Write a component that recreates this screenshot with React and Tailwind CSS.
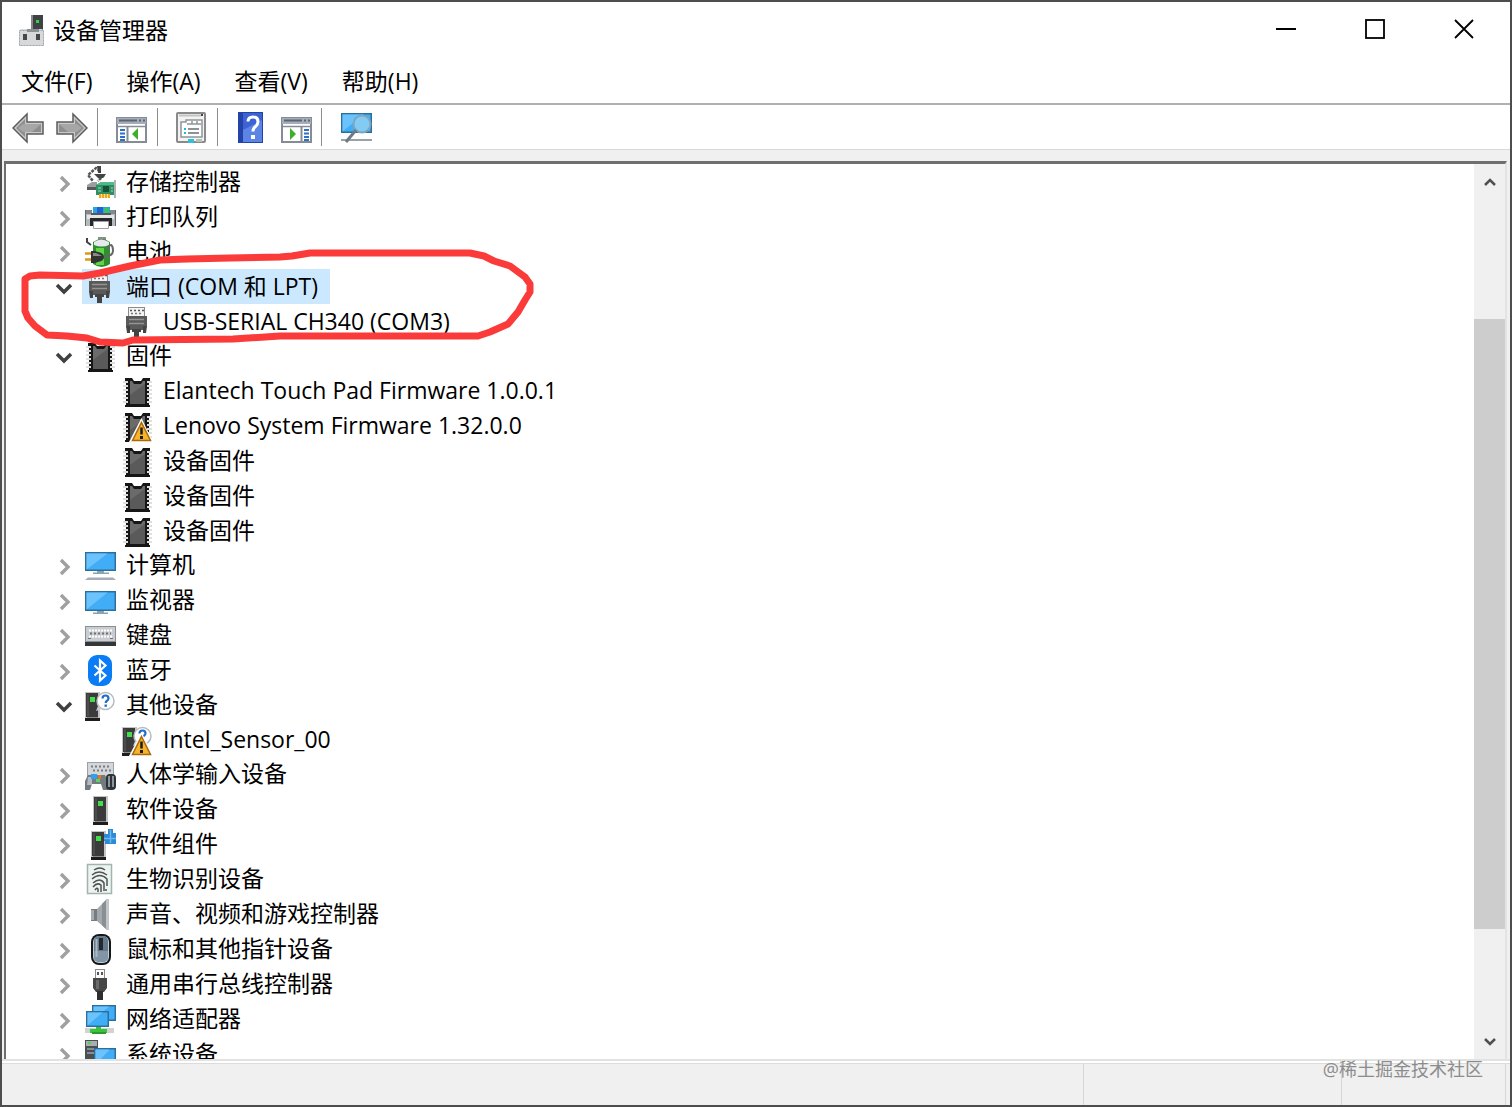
import React, { useState } from "react";

function Icon({ children }) {
  return (
    <svg viewBox="0 0 32 32" className="w-8 h-8 shrink-0" aria-hidden="true">
      {children}
    </svg>
  );
}

/* ---------- shared icon parts ---------- */

function Screen({ x, y, w, h }) {
  return (
    <>
      <rect x={x} y={y} width={w} height={h} fill="#2b6f9c" />
      <rect x={x + 1.5} y={y + 1.5} width={w - 3} height={h - 3} fill="#42adf7" />
      <path
        d={`M${x + 1.5} ${y + 1.5}h${(w - 3) * 0.75}L${x + 1.5} ${y + h - 1.5}z`}
        fill="#6cc2fb"
      />
    </>
  );
}

function Tower({ x }) {
  return (
    <>
      <rect x={x} y="3" width="15" height="27" fill="#c4c4c4" />
      <rect x={x + 1} y="4" width="12" height="24" fill="#3b3b3b" />
      <rect x={x + 2} y="5" width="2" height="22" fill="#4c4c4c" />
      <rect x={x + 5} y="8" width="5" height="5" fill="#41e04a" />
      <rect x={x} y="29" width="15" height="3" fill="#1d1d1d" />
      <rect x={x + 2} y="28" width="11" height="1" fill="#8a8a8a" />
    </>
  );
}

function Chip() {
  return (
    <>
      <path d="M4 3h7l2 3h7l2-3h7v29H4z" fill="#161616" />
      <path d="M4.500 6v24M28.500 6v24" stroke="#dedede" strokeWidth="5" strokeDasharray="2 2" />
      <path d="M3.500 8v22M29.500 8v22" stroke="#fff" strokeWidth="3" strokeDasharray="2 2" />
      <path d="M9 6h2l2 3h7l2-3h2v23H9z" fill="#6b6b6b" />
      <path d="M9 20L24 9v20H9z" fill="#5a5a5a" />
    </>
  );
}

function Warning() {
  return (
    <>
      <path d="M20.5 8L32 32H8z" fill="#fff" />
      <path d="M20.5 12.5l9 18h-18z" fill="#f6b32c" stroke="#a9690a" strokeWidth="1.5" />
      <path d="M20.5 17.5v7" stroke="#1c1c1c" strokeWidth="2.5" />
      <rect x="19" y="26" width="3" height="3" fill="#1c1c1c" />
    </>
  );
}

function Bubble() {
  return (
    <>
      <circle cx="21.5" cy="12" r="8.5" fill="#fff" stroke="#b7bcc0" strokeWidth="1.5" />
      <path d="M14 17l-2 5 6-2z" fill="#c8cccf" />
      <path d="M18.5 9.500q0-3 3-3t3 2.800q0 1.500-1.800 2.700-1 .7-1 2" fill="none" stroke="#1f6fc4" strokeWidth="2.2" />
      <rect x="20.5" y="15.5" width="2.4" height="2.3" fill="#1f6fc4" />
    </>
  );
}

function Port() {
  return (
    <>
      <rect x="7.5" y="1.5" width="16" height="10" fill="#f4f4f4" stroke="#8b8b8b" />
      <path d="M9 4.500h14" stroke="#555" strokeWidth="1.5" strokeDasharray="2 2" />
      <path d="M10 7.500h12" stroke="#777" strokeWidth="1.5" strokeDasharray="2 2" />
      <path d="M5 10h21v10l-2 4H7l-2-4z" fill="#5a5a5a" />
      <path d="M8 13.500h15M8 17.500h15" stroke="#949494" strokeWidth="1.5" />
      <path d="M5 20h4v7H6zM22 20h4l-1 7h-3zM11 23h9v3h-2v6h-5v-6h-2z" fill="#444" />
    </>
  );
}

const icons = {
  storage: (
    <>
      <path d="M16 5l-4-3-8 7 5 6M20 9l-6 6" fill="none" stroke="#555" strokeWidth="2.5" strokeDasharray="3 1" />
      <path d="M10 8h12l-3 4h-5zM13 0h4v7h-3z" fill="#444" />
      <path d="M3 19l5-3h5v7H3z" fill="#9a9ea0" />
      <path d="M3 21h10v3H3z" fill="#55595b" />
      <path d="M12 19l5-3h13v13H12z" fill="#2f8f63" />
      <path d="M12 19l5-3h13v3z" fill="#4fb98a" />
      <rect x="19" y="20" width="6" height="6" fill="#14533a" />
      <path d="M14 22h3M14 25h3M27 22h2M27 25h2" stroke="#9be0c0" />
      <path d="M31 14v18" stroke="#9a9a9a" strokeWidth="1.5" />
      <rect x="15" y="28" width="11" height="4" fill="#f0a51e" />
      <path d="M17.5 28v4M20.5 28v4M23.5 28v4" stroke="#fbe08b" />
    </>
  ),
  printer: (
    <>
      <rect x="9" y="6" width="17" height="8" fill="#2aa3e0" />
      <rect x="13" y="6" width="6" height="8" fill="#1c63d6" />
      <rect x="20" y="7" width="5" height="5" fill="#37c26a" />
      <path d="M1 9h7v4h18V9h6v16H1z" fill="#b6babd" />
      <path d="M1 9h7v4H1zM26 9h6v4h-6z" fill="#85898d" />
      <path d="M7 12h20v2H7z" fill="#55585b" />
      <path d="M3 14h27v4H3z" fill="#e3e5e7" />
      <path d="M6 17h22v8h-3v-4H9v4H6z" fill="#26282a" />
      <path d="M9.5 20.500h15v7h-15z" fill="#fff" stroke="#a0a0a0" />
      <path d="M1 9h1v16H1zM31 9h1v16h-1z" fill="#63686c" />
    </>
  ),
  battery: (
    <>
      <rect x="14" y="1" width="8" height="4" fill="#8c8c8c" />
      <path d="M9 6q9-6 17 0v22q-8 6-17 0z" fill="#2f8f2f" />
      <path d="M10 6q7-5 15 0v3q-7 3-15 0z" fill="#e8e8ee" />
      <path d="M12 12h8v17h-8z" fill="#5fd648" />
      <path d="M3 2v4l4 3" fill="none" stroke="#444" strokeWidth="2" />
      <path d="M20 21q9-1 9-6t-2-6q-3 0-3 5" fill="none" stroke="#666" strokeWidth="2" />
      <path d="M1 17.500h8M1 23.500h8" stroke="#d99b1b" strokeWidth="2.5" />
      <path d="M7 15h4l3 1q6 1 6 5t-6 5l-3 1H7z" fill="#333" />
      <path d="M9 17h3l6 3H9z" fill="#8b8b8b" />
    </>
  ),
  port: <Port />,
  chip: <Chip />,
  chipWarning: (
    <>
      <Chip />
      <Warning />
    </>
  ),
  computer: (
    <>
      <Screen x={1} y={3} w={31} h={19} />
      <path d="M13 22h7v1.500h5V25H9v-1.500h4z" fill="#8aa4b4" />
      <path d="M1 31l3-2.500h25l3 2.500z" fill="#a8acb6" />
    </>
  ),
  monitor: (
    <>
      <Screen x={1} y={7} w={31} h={20} />
      <path d="M13 27h7v1.500h4V30H9v-1.500h4z" fill="#8aa4b4" />
    </>
  ),
  keyboard: (
    <>
      <rect x="1" y="7" width="31" height="20" fill="#8a8f94" />
      <rect x="2" y="8" width="29" height="14" fill="#c9cdd1" />
      <path d="M5 11.500h23M5 17.500h23" stroke="#fff" strokeWidth="2" strokeDasharray="2 1" />
      <path d="M6 14.500h21" stroke="#6d7276" strokeWidth="2" strokeDasharray="2 2" />
      <path d="M4 19.500h3M26 19.500h3" stroke="#6d7276" />
      <rect x="1" y="23" width="31" height="4" fill="#34373a" />
    </>
  ),
  bluetooth: (
    <>
      <rect x="4" y="1" width="24" height="31" rx="9" fill="#0a7cf5" />
      <path d="M10.5 11.500l11 10-5.500 5V6.500l5.500 5-11 10" fill="none" stroke="#fff" strokeWidth="2.2" />
    </>
  ),
  unknown: (
    <>
      <Tower x={1} />
      <Bubble />
    </>
  ),
  unknownWarning: (
    <>
      <Tower x={1} />
      <Bubble />
      <Warning />
    </>
  ),
  hid: (
    <>
      <rect x="3" y="4" width="27" height="17" fill="#9aa0a6" />
      <rect x="4" y="5" width="25" height="14" fill="#d4d7da" />
      <path d="M7 8.500h20M9 12.500h18" stroke="#777c80" strokeWidth="2" strokeDasharray="2 2" />
      <path d="M4 17h17l3 6v9h-5l-2-6H8l-2 6H1v-9z" fill="#737a80" />
      <path d="M4 19h4v8H3z" fill="#b4bac0" />
      <rect x="7" y="16" width="6" height="5" fill="#2f9ff0" />
      <rect x="14" y="17" width="3" height="4" fill="#e8742a" />
      <rect x="12" y="21" width="4" height="3" fill="#5ed35e" />
      <rect x="22" y="16" width="10" height="16" rx="4" fill="#2e3338" />
      <path d="M25 18v11M29 18v11" stroke="#8b959e" strokeWidth="2" />
    </>
  ),
  software: <Tower x={9} />,
  component: (
    <>
      <Tower x={7} />
      <path d="M24 1h5v4h3v11H21v-3h-1V6h4z" fill="#2c8ad6" />
      <path d="M20 10.500h12M26.5 2v13" stroke="#6bb7ef" strokeWidth="1.5" />
    </>
  ),
  fingerprint: (
    <>
      <rect x="3.5" y="1.5" width="24" height="29" fill="#eef3f1" stroke="#9fb5ae" strokeWidth="1.5" />
      <path
        d="M10 7q6-4 11 0M8 12q7-6 15 0M8 16q8-7 15 0v7M9 20q7-6 11 0v8M9 24q4-5 8-2v7M11 27q2-3 3-1v3M22 26v2"
        fill="none"
        stroke="#4d5553"
        strokeWidth="1.5"
      />
    </>
  ),
  speaker: (
    <>
      <rect x="7" y="11" width="6" height="12" fill="#777c80" />
      <rect x="7" y="12" width="3" height="10" fill="#a9adb0" />
      <path d="M13 11L22 2v29l-9-8z" fill="#a3a8ac" />
      <path d="M18 6l4-4v29l-4-4z" fill="#8a8f93" />
      <path d="M22 1h3v31h-3z" fill="#c3c6c8" />
    </>
  ),
  mouse: (
    <>
      <rect x="7" y="1" width="20" height="31" rx="8" fill="#15181b" />
      <rect x="9" y="3" width="16" height="27" rx="6" fill="#c3ccd3" />
      <rect x="10" y="3" width="14" height="26" rx="5" fill="#66798a" />
      <path d="M10 18h14v7q-1 4-7 4t-7-4z" fill="#8195a6" />
      <path d="M12.5 6v18" stroke="#a9bac7" strokeWidth="2" />
      <rect x="15" y="5" width="4" height="12" fill="#23292e" />
    </>
  ),
  usb: (
    <>
      <rect x="11.5" y="1.5" width="9" height="9" fill="#fafafa" stroke="#8b8b8b" />
      <rect x="13" y="4" width="2" height="3" fill="#555" />
      <rect x="17" y="4" width="2" height="3" fill="#555" />
      <path d="M9 10h14v10l-3 4h-8l-3-4z" fill="#474747" />
      <path d="M12 12h3v9h-3z" fill="#6b6b6b" />
      <path d="M13 23h6v9h-6z" fill="#2e2e2e" />
    </>
  ),
  network: (
    <>
      <Screen x={8} y={2} w={24} h={16} />
      <Screen x={2} y={8} w={23} h={16} />
      <rect x="1" y="25" width="29" height="5" fill="#cfd4cf" />
      <path d="M12 24h5v2h6v4H6v-4h6z" fill="#3cc23c" />
      <path d="M8 29h14v2H8z" fill="#2c9a2c" />
    </>
  ),
  system: (
    <>
      <rect x="1" y="2" width="13" height="30" fill="#4a4f53" />
      <rect x="2" y="3" width="11" height="5" fill="#a9aeb1" />
      <rect x="4" y="4" width="3" height="2" fill="#45d745" />
      <path d="M3 11h9M3 15h9" stroke="#888d90" strokeWidth="2" />
      <Screen x={10} y={10} w={22} h={18} />
    </>
  ),
};

const devices = [
  { id: "storage", icon: "storage", label: "存储控制器" },
  { id: "print", icon: "printer", label: "打印队列" },
  { id: "battery", icon: "battery", label: "电池" },
  {
    id: "ports",
    icon: "port",
    label: "端口 (COM 和 LPT)",
    children: [{ id: "ch340", icon: "port", label: "USB-SERIAL CH340 (COM3)" }],
  },
  {
    id: "firmware",
    icon: "chip",
    label: "固件",
    children: [
      { id: "elan", icon: "chip", label: "Elantech Touch Pad Firmware 1.0.0.1" },
      { id: "lenovo", icon: "chipWarning", label: "Lenovo System Firmware 1.32.0.0" },
      { id: "fw1", icon: "chip", label: "设备固件" },
      { id: "fw2", icon: "chip", label: "设备固件" },
      { id: "fw3", icon: "chip", label: "设备固件" },
    ],
  },
  { id: "computer", icon: "computer", label: "计算机" },
  { id: "monitor", icon: "monitor", label: "监视器" },
  { id: "keyboard", icon: "keyboard", label: "键盘" },
  { id: "bluetooth", icon: "bluetooth", label: "蓝牙" },
  {
    id: "other",
    icon: "unknown",
    label: "其他设备",
    children: [{ id: "sensor", icon: "unknownWarning", label: "Intel_Sensor_00" }],
  },
  { id: "hid", icon: "hid", label: "人体学输入设备" },
  { id: "software", icon: "software", label: "软件设备" },
  { id: "component", icon: "component", label: "软件组件" },
  { id: "biometric", icon: "fingerprint", label: "生物识别设备" },
  { id: "sound", icon: "speaker", label: "声音、视频和游戏控制器" },
  { id: "mouse", icon: "mouse", label: "鼠标和其他指针设备" },
  { id: "usb", icon: "usb", label: "通用串行总线控制器" },
  { id: "network", icon: "network", label: "网络适配器" },
  { id: "system", icon: "system", label: "系统设备" },
];

function TitleBar() {
  return (
    <header className="flex h-14 shrink-0 items-center pl-[14px]">
      <Icon>
        <rect x="15" y="1" width="12" height="16" fill="#3f4245" />
        <rect x="15" y="1" width="2" height="16" fill="#85898c" />
        <rect x="20" y="6" width="3" height="3" fill="#35d23f" />
        <path d="M5 15h21l2 2v15H3V17z" fill="#d6d8da" />
        <path d="M3.500 16.500h24v15h-24z" fill="none" stroke="#a2a6a9" strokeDasharray="2 1" />
        <path d="M11 15h12v3H11z" fill="#8d9194" />
        <rect x="7" y="20" width="4" height="6" fill="#44484b" />
        <rect x="20" y="20" width="4" height="6" fill="#44484b" />
      </Icon>
      <h1 className="ml-[5px]">设备管理器</h1>
      <div className="ml-auto flex h-full pr-0.5">
        <button aria-label="最小化" className="flex w-[89px] items-center justify-center">
          <svg viewBox="0 0 20 20" className="w-5 h-5 mb-0.5">
            <path d="M0 10h20" stroke="#000" strokeWidth="2" />
          </svg>
        </button>
        <button aria-label="最大化" className="flex w-[89px] items-center justify-center">
          <svg viewBox="0 0 20 20" className="w-5 h-5 mb-0.5">
            <rect x="1" y="1" width="18" height="18" fill="none" stroke="#000" strokeWidth="1.8" />
          </svg>
        </button>
        <button aria-label="关闭" className="flex w-[89px] items-center justify-center">
          <svg viewBox="0 0 20 20" className="w-5 h-5 mb-0.5">
            <path d="M1 1l18 18M19 1L1 19" stroke="#000" strokeWidth="1.8" />
          </svg>
        </button>
      </div>
    </header>
  );
}

function MenuBar() {
  const menus = ["文件(F)", "操作(A)", "查看(V)", "帮助(H)"];
  return (
    <nav className="flex h-[45px] shrink-0 items-center gap-[34px] pl-[19px]">
      {menus.map((menu) => (
        <button key={menu}>{menu}</button>
      ))}
    </nav>
  );
}

function Separator() {
  return <div className="ml-[9px] mr-[18px] h-[38px] w-px bg-[#8c8c8c]" />;
}

function ToolButton({ label, children }) {
  return (
    <button aria-label={label} title={label} className="pt-0.5">
      <Icon>{children}</Icon>
    </button>
  );
}

function Arrow() {
  return (
    <>
      <path d="M1 16L15 2v8h16v12H15v8z" fill="#c9c9c9" stroke="#5c5c5c" strokeWidth="1.5" />
      <path d="M4 16l9-9v5h16v8H13v5z" fill="#8e8e8e" />
      <path d="M6 16l5-4h18l-9 8h-9z" fill="#a6a6a6" />
    </>
  );
}

function Panel() {
  return (
    <>
      <rect x="1" y="6" width="29" height="24" fill="#fff" stroke="#868b98" strokeWidth="2" />
      <rect x="1" y="6" width="29" height="6" fill="#a6acb8" />
      <path d="M3 8.500h18M23 8.500h2M27 8.500h2" stroke="#5d6475" strokeWidth="2" />
      <path d="M1 14.500h29" stroke="#868b98" strokeWidth="1.5" />
    </>
  );
}

function Toolbar() {
  return (
    <div className="flex h-[46px] shrink-0 items-center border-t-2 border-[#b0b0b0] pl-[10px]">
      <div className="flex gap-3">
        <ToolButton label="后退">
          <Arrow />
        </ToolButton>
        <ToolButton label="前进">
          <g transform="matrix(-1 0 0 1 32 0)">
            <Arrow />
          </g>
        </ToolButton>
      </div>
      <Separator />
      <ToolButton label="显示/隐藏控制台树">
        <Panel />
        <path d="M11.500 15v15" stroke="#868b98" strokeWidth="2" />
        <path d="M4 18h5M4 21.500h5M4 25h5M4 28h5" stroke="#2f6fc4" strokeWidth="1.8" />
        <path d="M22 16v12l-6-6z" fill="#3fae2a" />
      </ToolButton>
      <Separator />
      <ToolButton label="属性">
        <rect x="1" y="1" width="28" height="29" rx="1" fill="#f3f3f3" stroke="#8a8a8a" strokeWidth="2" />
        <path d="M3 3.500h22" stroke="#c4c4c4" strokeWidth="2" />
        <rect x="25" y="2" width="2" height="2" fill="#444" />
        <path d="M5 10h5V8h16v17H5z" fill="#fff" stroke="#8e959c" strokeWidth="1.5" />
        <path d="M11 12h14M16 9v3M21 9v3" stroke="#8e959c" strokeWidth="1.5" />
        <path d="M12 17h11M12 21h11" stroke="#8d9297" strokeWidth="1.8" />
        <path d="M8 17h2M8 21h2" stroke="#22b7e0" strokeWidth="2" />
        <rect x="12" y="27" width="6" height="4" fill="#30bfe0" />
        <rect x="20" y="27" width="6" height="3" fill="#b4c4b4" />
      </ToolButton>
      <Separator />
      <div className="flex gap-3">
        <ToolButton label="帮助">
          <rect x="2" y="0" width="25" height="31" fill="#2443a8" />
          <rect x="7" y="1" width="19" height="29" fill="#3d63d2" />
          <path d="M7 18L26 8v22H7z" fill="#5b84e4" />
          <path d="M12 9.500q0-4.500 5-4.500t5 4.500q0 3-2.500 5-2.500 1.700-2.500 5" fill="none" stroke="#fff" strokeWidth="3" />
          <rect x="15" y="23" width="4" height="4" fill="#fff" />
        </ToolButton>
        <ToolButton label="操作窗格">
          <g transform="translate(1 0)">
            <Panel />
            <path d="M20.500 15v15" stroke="#868b98" strokeWidth="2" />
            <path d="M23 18h5M23 21.500h5M23 25h5M23 28h5" stroke="#2f6fc4" strokeWidth="1.8" />
            <path d="M9 16v12l6-6z" fill="#3fae2a" />
          </g>
        </ToolButton>
      </div>
      <Separator />
      <ToolButton label="扫描检测硬件改动">
        <Screen x={1} y={1} w={31} h={20} />
        <path d="M1 28h31" stroke="#9aa2a8" strokeWidth="2" />
        <circle cx="22" cy="12" r="8.5" fill="#8fd0f3" fillOpacity="0.85" stroke="#7da7be" strokeWidth="2" />
        <path d="M16 18L6 30" stroke="#6c7b86" strokeWidth="3" />
      </ToolButton>
    </div>
  );
}

function TreeRow({ item, open, onToggle, selected, onSelect, nested }) {
  return (
    <div className="flex h-[35px] items-stretch">
      {nested ? (
        <span className="w-[73px]" />
      ) : (
        <button
          aria-label={open ? "折叠" : "展开"}
          onClick={onToggle}
          className="flex w-9 items-center justify-center pt-1"
        >
          {open ? (
            <svg viewBox="0 0 18 18" className="w-[18px] h-[18px]">
              <path d="M2 5l7 7 7-7" fill="none" stroke="#404040" strokeWidth="3.5" />
            </svg>
          ) : (
            <svg viewBox="0 0 18 18" className="w-[18px] h-[18px]">
              <path d="M6 2l7 7-7 7" fill="none" stroke="#a0a0a0" strokeWidth="3.4" />
            </svg>
          )}
        </button>
      )}
      <button
        onClick={onSelect}
        className={
          "flex items-center gap-[10px] pl-0.5 pr-3 whitespace-nowrap " +
          (selected ? "bg-[#cce8ff]" : "")
        }
      >
        <Icon>{icons[item.icon]}</Icon>
        <span className="pb-px">{item.label}</span>
      </button>
    </div>
  );
}

function ScrollBar() {
  return (
    <div className="flex w-[31px] shrink-0 flex-col bg-[#f0f0f0]">
      <button aria-label="向上滚动" className="flex h-[35px] items-center justify-center">
        <svg viewBox="0 0 12 10" className="w-3 h-[10px]">
          <path d="M1 8l5-5 5 5" fill="none" stroke="#505050" strokeWidth="2.5" />
        </svg>
      </button>
      <div className="grow-[120]" />
      <div className="grow-[610] bg-[#cdcdcd]" />
      <div className="grow-[95]" />
      <button aria-label="向下滚动" className="flex h-[35px] items-center justify-center">
        <svg viewBox="0 0 12 10" className="w-3 h-[10px]">
          <path d="M1 2l5 5 5-5" fill="none" stroke="#505050" strokeWidth="2.5" />
        </svg>
      </button>
    </div>
  );
}

export default function App() {
  const [open, setOpen] = useState({ ports: true, firmware: true, other: true });
  const [selected, setSelected] = useState("ports");

  const toggle = (id) => setOpen({ ...open, [id]: !open[id] });

  return (
    <div className="relative flex h-screen flex-col overflow-hidden border-2 border-[#4d4d4d] bg-white font-['Open_Sans','Noto_Sans_CJK_SC',sans-serif] text-[23px] leading-8 text-black">
      <TitleBar />
      <MenuBar />
      <Toolbar />

      <div className="flex min-h-0 flex-1 flex-col border-t border-[#d9d9d9] bg-[#f0f0f0] pt-[11px] pl-0.5 pr-[3px]">
        <main className="flex min-h-0 flex-1 border-l-2 border-r-2 border-t-[3px] border-[#6f6f6f] border-r-[#e3e3e3] bg-white">
          <div className="relative min-w-0 flex-1 overflow-hidden">
            <ul className="pl-10">
              {devices.map((item) => (
                <li key={item.id}>
                  <TreeRow
                    item={item}
                    open={!!open[item.id]}
                    onToggle={() => toggle(item.id)}
                    selected={selected === item.id}
                    onSelect={() => setSelected(item.id)}
                  />
                  {item.children && open[item.id] && (
                    <ul className="-mb-px">
                      {item.children.map((child) => (
                        <li key={child.id}>
                          <TreeRow
                            item={child}
                            nested
                            selected={selected === child.id}
                            onSelect={() => setSelected(child.id)}
                          />
                        </li>
                      ))}
                    </ul>
                  )}
                </li>
              ))}
            </ul>

            {/* hand-drawn marker around the COM port */}
            <svg
              viewBox="0 0 540 190"
              className="pointer-events-none absolute left-0 top-0 h-[190px] w-[540px]"
              aria-hidden="true"
            >
              <path
                d="M19 115L24 112 34 111 77 112 94 109 124 102 154 96 181 95 224 94 274 93 286 92 304 89 464 89 478 92 488 97 504 102 519 113 524 120 524 128 519 136 512 148 502 160 484 168 472 172 274 172 227 175 127 176 117 179 94 178 81 174 61 172 41 171 29 162 22 154 19 147z"
                fill="none"
                stroke="#fb3a3a"
                strokeWidth="7"
                strokeLinejoin="round"
              />
            </svg>
          </div>
          <ScrollBar />
        </main>
      </div>

      <footer className="flex h-[46px] shrink-0 border-t-2 border-[#e2e2e2] bg-white pt-0.5">
        <div className="flex flex-1 justify-end border-t border-[#dcdcdc] bg-[#f0f0f0] pr-1">
          <div className="w-[258px] border-l border-[#d7d7d7]" />
          <div className="w-[165px] border-x border-[#d7d7d7]" />
        </div>
      </footer>

      <span className="absolute bottom-6 right-[27px] text-[18px] leading-6 text-[#8c8c8c]">
        @稀土掘金技术社区
      </span>
    </div>
  );
}
